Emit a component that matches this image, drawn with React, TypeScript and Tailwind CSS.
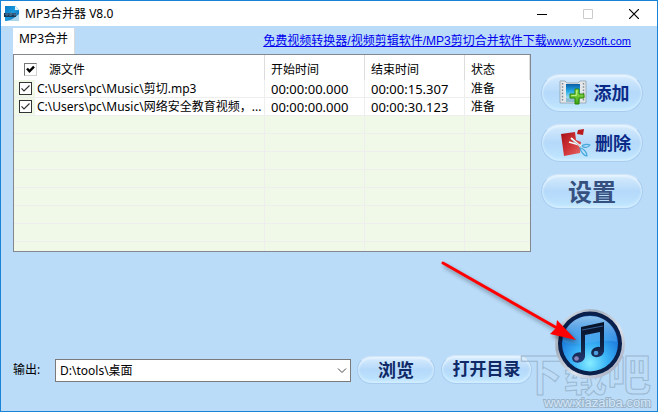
import React from "react";
import clsx from "clsx";

const files = [
    { id: 1, path: "C:\\Users\\pc\\Music\\", name: "剪切", tail: ".mp3", start: "00:00:00.000", end: "00:00:15.307", status: "准备" },
    { id: 2, path: "C:\\Users\\pc\\Music\\", name: "网络安全教育视频，", tail: "...", start: "00:00:00.000", end: "00:00:30.123", status: "准备" },
];

const emptyRows = [1, 2, 3, 4, 5, 6, 7];

function Check({ label, bold }: { label: string; bold?: boolean }) {
    return (
        <span className="grid size-[13px] shrink-0">
            <input
                type="checkbox"
                defaultChecked
                aria-label={label}
                className={clsx(
                    "peer col-start-1 row-start-1 size-full appearance-none border bg-white",
                    bold ? "border-[#777777] border-r-[#d0d0d0] border-b-[#d0d0d0]" : "border-[#333333]"
                )}
            />
            <svg viewBox="0 0 13 13" className="pointer-events-none invisible col-start-1 row-start-1 size-full peer-checked:visible">
                <path d={bold ? "M3 5.5 L5.5 8.3 L10 3.6" : "M2.5 6.3 L5 9 L10.5 3.5"} fill="none" stroke={bold ? "#000" : "#333"} strokeWidth={bold ? 2.4 : 1.2} />
            </svg>
        </span>
    );
}

function PillButton({ className, children }: { className?: string; children: React.ReactNode }) {
    return (
        <button
            type="button"
            className={clsx(
                "flex items-center justify-center rounded-full border border-[#a9cdf0] border-t-[#d3e6f8] bg-linear-to-b from-[#d6ebfd] via-[#b5d9fa] to-[#bfe6ff] font-bold whitespace-nowrap shadow-[inset_0_2px_2px_#e6f4ff,inset_0_-2px_3px_#d4eeff]",
                className
            )}
        >
            {children}
        </button>
    );
}

function AppIcon() {
    return (
        <svg viewBox="0 0 16 17" className="h-[17px] w-4">
            <defs>
                <linearGradient id="app" x1="0" y1="0" x2="1" y2="1">
                    <stop offset="0" stopColor="#0878c4" />
                    <stop offset=".5" stopColor="#1a9be0" />
                    <stop offset="1" stopColor="#0b5794" />
                </linearGradient>
            </defs>
            <path d="M1 1h10l4 4v11H1z" fill="url(#app)" />
            <path d="M11 1v4h4z" fill="#e5f3fb" />
            <path d="M1 16c4 0 8-2 14-7v7z" fill="#a8d5ee" />
            <path d="M0 8h12v4H0z" fill="#173b5b" />
            <path d="M2 8v2h2V8M6 8v3M6 8h2v2H6M10 8v2h2V8" fill="none" stroke="#5d88a8" strokeWidth=".8" />
        </svg>
    );
}

function FilmIcon() {
    return (
        <svg viewBox="0 0 28 26" className="h-[26px] w-7">
            <defs>
                <linearGradient id="film" x1="0" y1="0" x2="0" y2="1">
                    <stop offset="0" stopColor="#075ea6" />
                    <stop offset=".5" stopColor="#23a7e5" />
                    <stop offset="1" stopColor="#a5e0f4" />
                </linearGradient>
                <linearGradient id="plus" x1="0" y1="0" x2="0" y2="1">
                    <stop offset="0" stopColor="#a4e85a" />
                    <stop offset="1" stopColor="#39a511" />
                </linearGradient>
            </defs>
            <path d="M1 1h5l2 2h11l2-2h6v22H1z" fill="#e3e7ea" stroke="#7d8a93" strokeWidth=".6" />
            <path d="M7 4h14v14H7z" fill="url(#film)" />
            <path d="M7 18h14v4H7z" fill="#8fbdd6" />
            <path d="M3.5 3v19M24.5 3v19" stroke="#7d8992" strokeWidth="1.4" strokeDasharray="1.6 1.6" />
            <path d="M16 9h4v5h5v4h-5v6h-4v-6h-5v-4h5z" fill="url(#plus)" stroke="#298507" />
            <path d="M17.4 10.5v5h-5" fill="none" stroke="#ccf69b" strokeWidth=".8" />
        </svg>
    );
}

function CutIcon() {
    return (
        <svg viewBox="0 0 30 30" className="size-[30px]">
            <defs>
                <linearGradient id="cut" x1="0" y1="0" x2="1" y2="1">
                    <stop offset="0" stopColor="#a40f15" />
                    <stop offset=".5" stopColor="#cf3235" />
                    <stop offset="1" stopColor="#e66a68" />
                </linearGradient>
            </defs>
            <path d="M0 6l14-2 1 8 5 2-1 11-16 3z" fill="url(#cut)" />
            <path d="M17 2l6-1-1 6-6-1z" fill="#bb1a1c" />
            <path d="M10 10l10 9M8 14l14 4" stroke="#f3fafc" strokeWidth="1.8" />
            <path d="M11 12l9 7" stroke="#82949e" strokeWidth=".6" />
            <path d="M21 18c2-2 6-2 8-1-2 3-6 3-8 1zM19 20c3 0 7 4 7 8-3 0-6-4-7-8z" fill="none" stroke="#46a9db" strokeWidth="1.2" />
        </svg>
    );
}

function MusicIcon() {
    return (
        <svg viewBox="0 0 72 72" className="size-[72px]">
            <defs>
                <linearGradient id="rim" x1="0" y1="0" x2="1" y2="1">
                    <stop offset="0" stopColor="#f3f6fa" />
                    <stop offset=".3" stopColor="#a3adbb" />
                    <stop offset=".6" stopColor="#dce2eb" />
                    <stop offset="1" stopColor="#9299b3" />
                </linearGradient>
                <radialGradient id="disc" cx=".5" cy=".85" r=".85">
                    <stop offset="0" stopColor="#86ecff" />
                    <stop offset=".35" stopColor="#3cb5f8" />
                    <stop offset=".75" stopColor="#1b78dc" />
                    <stop offset="1" stopColor="#1559b4" />
                </radialGradient>
                <linearGradient id="shine" x1="0" y1="0" x2="0" y2="1">
                    <stop offset="0" stopColor="#b9e5ff" stopOpacity=".75" />
                    <stop offset="1" stopColor="#5cb4f2" stopOpacity=".3" />
                </linearGradient>
                <linearGradient id="note" x1="0" y1="14" x2="0" y2="56" gradientUnits="userSpaceOnUse">
                    <stop offset="0" stopColor="#061127" />
                    <stop offset=".6" stopColor="#102446" />
                    <stop offset="1" stopColor="#263a78" />
                </linearGradient>
            </defs>
            <circle cx="36" cy="36" r="35" fill="url(#rim)" />
            <circle cx="36" cy="35.5" r="32" fill="#0a1f4a" />
            <circle cx="36" cy="35.5" r="28" fill="url(#disc)" />
            <path d="M9 34C9 19 21 8 36 8s27 11 27 26c-16-5-35 6-54 0z" fill="url(#shine)" />
            <path d="M27 19l23-5v30h-4V24l-15 3v22h-4z" fill="url(#note)" />
            <path d="M28 22l21-4" stroke="#315d95" strokeWidth="1" />
            <ellipse cx="24.5" cy="49.5" rx="6.5" ry="5" transform="rotate(-18 24.5 49.5)" fill="url(#note)" />
            <ellipse cx="43.5" cy="44" rx="6.5" ry="5" transform="rotate(-18 43.5 44)" fill="url(#note)" />
            <circle cx="22.5" cy="50.5" r="2.3" fill="#8a84b8" />
            <circle cx="42" cy="45" r="2.3" fill="#4d9de0" />
        </svg>
    );
}

function FileTable() {
    return (
        <div className="min-w-0 flex-1 border border-[#828790] bg-[#f0f9e8]">
            <table className="w-full table-fixed border-separate border-spacing-0 text-left">
                <colgroup>
                    <col />
                    <col className="w-[100px]" />
                    <col className="w-[100px]" />
                    <col className="w-[65px]" />
                </colgroup>
                <thead className="bg-white">
                    <tr className="h-[25px]">
                        <th className="border-r border-[#dddddd] p-0 pt-1 pl-[10px] font-normal">
                            <span className="flex items-center gap-3">
                                <Check label="全选" bold />
                                源文件
                            </span>
                        </th>
                        <th className="border-r border-[#dddddd] p-0 pt-1 pl-[6px] font-normal">开始时间</th>
                        <th className="border-r border-[#dddddd] p-0 pt-1 pl-[6px] font-normal">结束时间</th>
                        <th className="border-r border-[#dddddd] p-0 pt-1 pl-[6px] font-normal">状态</th>
                    </tr>
                </thead>
                <tbody className="leading-4 [&_td]:border-r [&_td]:border-b [&_td]:border-[#eeeeee] [&_td]:p-0 [&_td:last-child]:border-r-0">
                    {files.map((file) => (
                        <tr key={file.id} className="h-[18px] bg-white">
                            <td>
                                <div className="flex h-[17px] items-center whitespace-nowrap">
                                    <span className="mr-[2px] flex h-full w-[21px] shrink-0 items-center bg-[#f0f9e8] pl-[5px]">
                                        <Check label={file.name} />
                                    </span>
                                    {file.path + file.name + file.tail}
                                </div>
                            </td>
                            <td><div className="pl-[6px] text-[13px]">{file.start}</div></td>
                            <td><div className="pl-[6px] text-[13px]">{file.end}</div></td>
                            <td><div className="pl-[6px]">{file.status}</div></td>
                        </tr>
                    ))}
                    {emptyRows.map((row) => (
                        <tr key={row} className="h-[18px]">
                            <td /><td /><td /><td />
                        </tr>
                    ))}
                    <tr className="h-[9px] [&>td]:border-b-0">
                        <td /><td /><td /><td />
                    </tr>
                </tbody>
            </table>
        </div>
    );
}

export default function App() {
    return (
        <div className="relative flex min-h-screen flex-col overflow-hidden border border-[#1883d7] bg-[#badcf9] font-['Noto_Sans','Noto_Sans_CJK_SC',sans-serif] text-xs text-black">
            <header className="flex h-[25px] items-center bg-white pl-[3px]">
                <AppIcon />
                <h1 className="ml-[5px] flex-1">MP3合并器 V8.0</h1>
                <button type="button" aria-label="最小化" className="flex h-full w-[46px] items-center justify-center">
                    <svg viewBox="0 0 10 10" className="size-[10px]"><path d="M0 5.5h10" stroke="#000" /></svg>
                </button>
                <button type="button" aria-label="最大化" disabled className="flex h-full w-[46px] items-center justify-center">
                    <svg viewBox="0 0 10 10" className="size-[10px]"><path d="M.5.5h9v9h-9z" fill="none" stroke="#ccc" /></svg>
                </button>
                <button type="button" aria-label="关闭" className="flex h-full w-[46px] items-center justify-center">
                    <svg viewBox="0 0 10 10" className="size-[10px]"><path d="M0 0l10 10M10 0L0 10" stroke="#000" strokeWidth="1.2" /></svg>
                </button>
            </header>

            <main className="flex flex-1 flex-col pt-[2px] pr-[14px] pl-3">
                <div className="flex h-[26px] items-center justify-between pr-3">
                    <button type="button" className="h-full w-[62px] border-r border-[#d9d9d9] bg-white pb-1">MP3合并</button>
                    <a href="#download" className="font-['Liberation_Sans','Noto_Sans_CJK_SC',sans-serif] whitespace-nowrap text-[#0000ee] underline">
                        免费视频转换器/视频剪辑软件/MP3剪切合并软件下载<span className="text-[11px]">www.yyzsoft.com</span>
                    </a>
                </div>

                <div className="flex items-start gap-[10px]">
                    <FileTable />
                    <div className="flex w-[102px] flex-col gap-3 pt-5 text-[#0b2a87]">
                        <PillButton className="h-[38px] gap-[7px] pl-1 text-lg">
                            <FilmIcon />
                            添加
                        </PillButton>
                        <PillButton className="h-[38px] gap-1 pl-2 text-lg">
                            <CutIcon />
                            删除
                        </PillButton>
                        <PillButton className="h-[35px] text-2xl text-[#36507f]">设置</PillButton>
                    </div>
                </div>

                <form className="mt-auto mb-[27px] flex items-end pr-[17px] text-[#0f2a66]" onSubmit={(e) => e.preventDefault()}>
                    <label htmlFor="output" className="mb-[6px] w-[42px] shrink-0 text-black">输出:</label>
                    <div className="mb-[2px] grid min-w-0 flex-1 items-center">
                        <select id="output" className="col-start-1 row-start-1 h-[23px] w-full appearance-none border border-[#7a7a7a] bg-white px-1 text-black">
                            <option>D:\tools\桌面</option>
                        </select>
                        <svg viewBox="0 0 10 6" className="pointer-events-none col-start-1 row-start-1 mr-1 h-[6px] w-[10px] justify-self-end">
                            <path d="M1 .5l4 4 4-4" fill="none" stroke="#444" />
                        </svg>
                    </div>
                    <PillButton className="ml-[6px] h-7 w-[78px] text-lg">浏览</PillButton>
                    <PillButton className="ml-[6px] h-[29px] w-[91px] text-[17px]">打开目录</PillButton>
                    <button type="button" aria-label="合并" className="z-10 mb-1 ml-[22px] rounded-full">
                        <MusicIcon />
                    </button>
                </form>
            </main>

            <div className="pointer-events-none absolute right-[6px] bottom-[2px] flex flex-col items-end text-[#c9def0]/20">
                <span className="text-[44px] leading-[44px] font-bold [-webkit-text-stroke:1px_#9bb8d1]">下载吧</span>
                <span className="font-['Liberation_Sans',sans-serif] text-[13px] leading-[13px] text-[#d3e7f8] [-webkit-text-stroke:2px_#9ab4cb] [paint-order:stroke]">www.xiazaiba.com</span>
            </div>

            <svg viewBox="0 0 140 88" className="pointer-events-none absolute right-[78px] bottom-[65px] z-20 h-[88px] w-[140px] drop-shadow-[2px_3px_2px_#00000066]">
                <path d="M4 5L118 70" stroke="#f00" strokeWidth="3" strokeLinecap="round" />
                <path d="M137 82L111 76L117 70L118 62Z" fill="#f00" />
            </svg>
        </div>
    );
}
